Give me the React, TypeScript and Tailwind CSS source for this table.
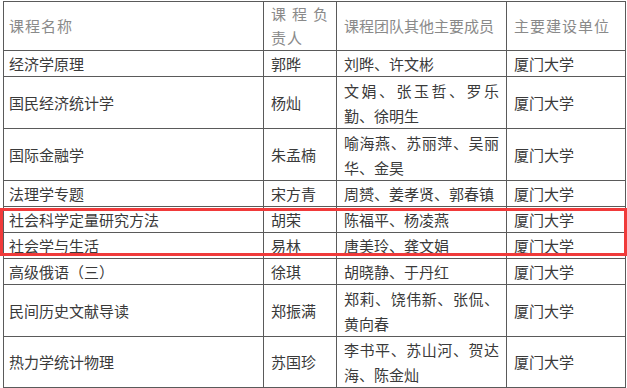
const rows: { name: string; lead: string; team: string; h: string }[] = [
  { name: "经济学原理", lead: "郭晔", team: "刘晔、许文彬", h: "h-[26px]" },
  { name: "国民经济统计学", lead: "杨灿", team: "文娟、张玉哲、罗乐勤、徐明生", h: "h-[52px]" },
  { name: "国际金融学", lead: "朱孟楠", team: "喻海燕、苏丽萍、吴丽华、金昊", h: "h-[52px]" },
  { name: "法理学专题", lead: "宋方青", team: "周赟、姜孝贤、郭春镇", h: "h-[26px]" },
  { name: "社会科学定量研究方法", lead: "胡荣", team: "陈福平、杨凌燕", h: "h-[26px]" },
  { name: "社会学与生活", lead: "易林", team: "唐美玲、龚文娟", h: "h-[25px]" },
  { name: "高级俄语（三）", lead: "徐琪", team: "胡晓静、于丹红", h: "h-[26px]" },
  { name: "民间历史文献导读", lead: "郑振满", team: "郑莉、饶伟新、张侃、黄向春", h: "h-[52px]" },
  { name: "热力学统计物理", lead: "苏国珍", team: "李书平、苏山河、贺达海、陈金灿", h: "h-[51px]" },
];

const cell = "border border-[#5a5a5a] align-middle px-[7px] py-0";

export default function App() {
  return (
    <div className="relative w-[627px] h-[388px] bg-white overflow-hidden font-['Noto_Sans_CJK_SC','Noto_Sans',sans-serif] text-[15px] leading-[24px] text-[#3a3a3a]">
      <table className="ml-[3px] mt-[1px] w-[622px] table-fixed border-collapse">
        <colgroup>
          <col className="w-[260px]" />
          <col className="w-[73px]" />
          <col className="w-[170px]" />
          <col className="w-[119px]" />
        </colgroup>
        <thead>
          <tr className="h-[49px] text-[#8a8a8a]">
            <td className={`${cell} pl-[5px] tracking-[1px]`}>课程名称</td>
            <td className={`${cell} text-justify tracking-[1px]`}>课程负责人</td>
            <td className={cell}>课程团队其他主要成员</td>
            <td className={`${cell} tracking-[1px]`}>主要建设单位</td>
          </tr>
        </thead>
        <tbody>
          {rows.map((r) => (
            <tr key={r.name} className={r.h}>
              <td className={`${cell} pl-[5px]`}>{r.name}</td>
              <td className={cell}>{r.lead}</td>
              <td className={`${cell} text-justify leading-[25px]`}>{r.team}</td>
              <td className={cell}>厦门大学</td>
            </tr>
          ))}
        </tbody>
      </table>
      <div className="absolute left-0 top-[208px] w-[627px] h-[48px] border-[3px] border-[#f03a3a] pointer-events-none" />
    </div>
  );
}
